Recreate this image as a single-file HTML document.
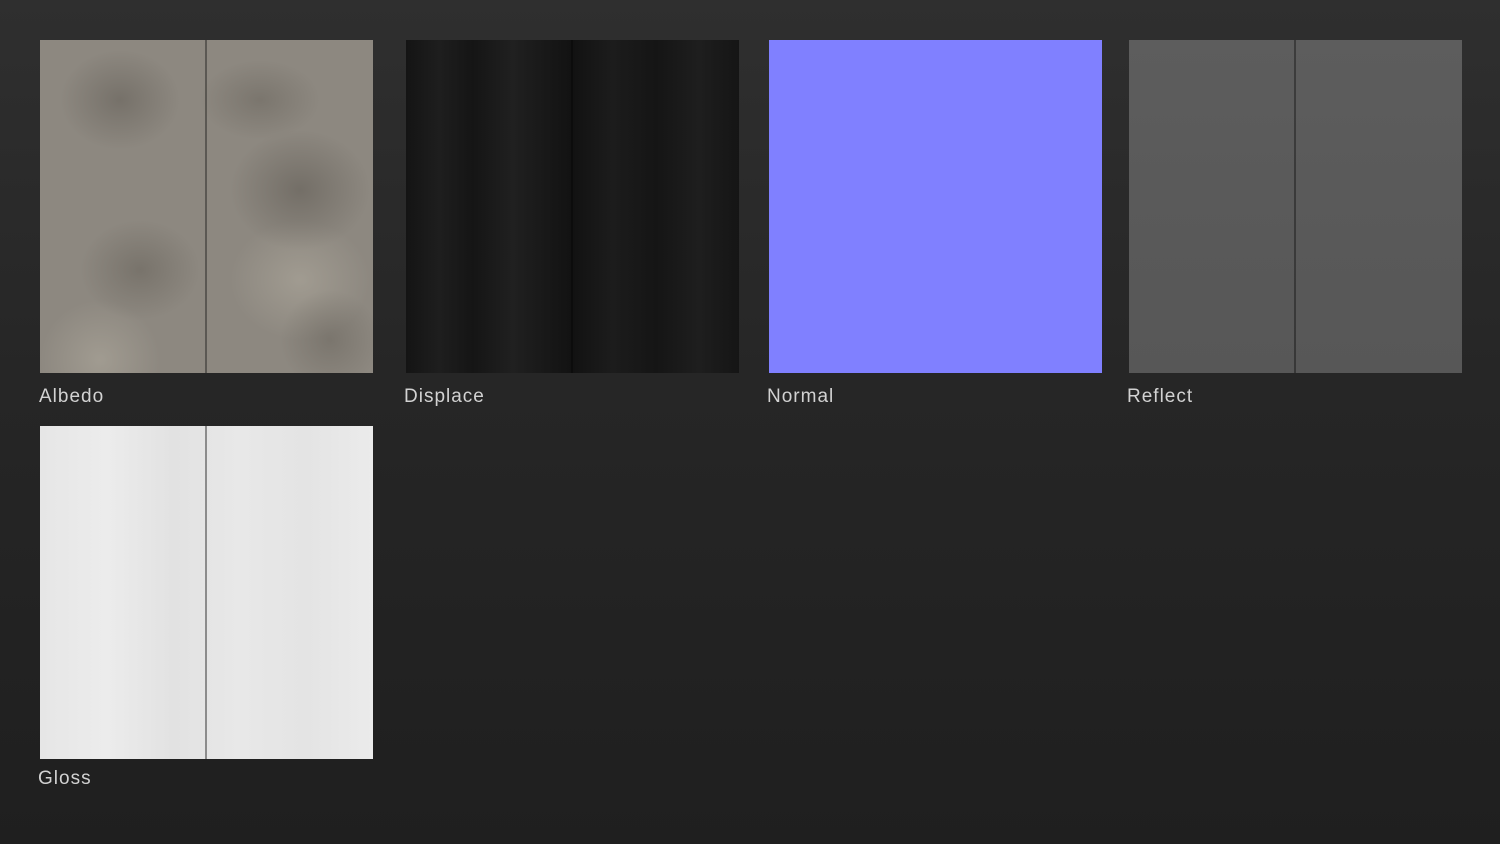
<!DOCTYPE html>
<html><head><meta charset="utf-8"><style>
html,body{margin:0;padding:0}
body{width:1500px;height:844px;overflow:hidden;position:relative;
background:linear-gradient(180deg,#2f2f2f 0%,#262626 45%,#1f1f1f 100%);
font-family:"Liberation Sans",sans-serif;}
.t{position:absolute;width:333px;height:333px;}
.t::after{content:"";position:absolute;left:165px;top:0;width:2px;height:100%;background:rgba(0,0,0,0.35)}
.l{position:absolute;color:#d2d2d2;font-size:19px;letter-spacing:1px}
#a{left:40px;top:40px;background:
radial-gradient(ellipse 60px 50px at 80px 60px,rgba(90,85,78,.45),transparent),
radial-gradient(ellipse 70px 60px at 260px 150px,rgba(90,85,78,.5),transparent),
radial-gradient(ellipse 60px 50px at 100px 230px,rgba(95,90,82,.45),transparent),
radial-gradient(ellipse 50px 50px at 290px 300px,rgba(95,90,82,.4),transparent),
radial-gradient(ellipse 60px 40px at 220px 60px,rgba(95,90,82,.4),transparent),
radial-gradient(ellipse 70px 60px at 260px 240px,rgba(190,184,170,.4),transparent),
radial-gradient(ellipse 60px 60px at 60px 320px,rgba(190,184,170,.4),transparent),
#8d8880;}
#d{left:406px;top:40px;background:
linear-gradient(90deg,#141414,#1e1e1e 10%,#151515 20%,#202020 32%,#121212 50%,#1c1c1c 62%,#151515 75%,#1e1e1e 88%,#151515);}
#d::after{background:rgba(0,0,0,.3)}
#n{left:769px;top:40px;background:#8080ff}
#n::after{display:none}
#r{left:1129px;top:40px;background:linear-gradient(180deg,#5d5d5d,#595959 60%,#575757)}
#g{left:40px;top:426px;background:linear-gradient(90deg,#e6e6e6,#ececec 20%,#e2e2e2 40%,#e8e8e8 60%,#e4e4e4 80%,#ebebeb)}
#g::after{background:#8c8c8c;width:1.5px}
</style></head><body>
<div class="t" id="a"></div><div class="l" style="left:39px;top:386px">Albedo</div>
<div class="t" id="d"></div><div class="l" style="left:404px;top:386px">Displace</div>
<div class="t" id="n"></div><div class="l" style="left:767px;top:386px">Normal</div>
<div class="t" id="r"></div><div class="l" style="left:1127px;top:386px">Reflect</div>
<div class="t" id="g"></div><div class="l" style="left:38px;top:768px">Gloss</div>
</body></html>
